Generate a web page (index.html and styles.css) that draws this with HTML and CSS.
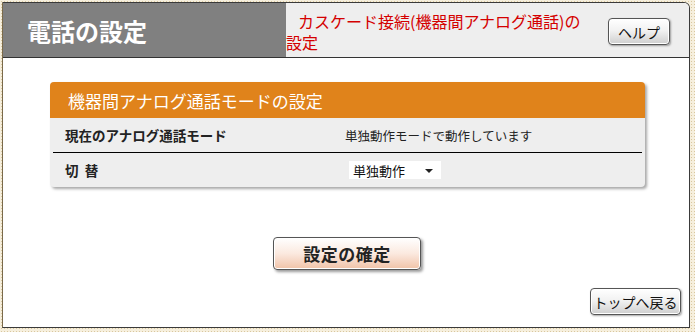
FILE: index.html
```html
<!DOCTYPE html>
<html lang="ja">
<head>
    <meta charset="UTF-8">
    <title>電話の設定</title>
    <link rel="stylesheet" href="styles.css">
</head>
<body>
    <div class="frame">
        <div class="header">
            <div class="title">電話の設定</div>
            <div class="subhead">
                <p class="subtitle">カスケード接続(機器間アナログ通話)の設定</p>
                <button class="btn help-btn">ヘルプ</button>
            </div>
        </div>

        <div class="content">
            <div class="card">
                <div class="card-head">機器間アナログ通話モードの設定</div>
                <div class="row row-line">
                    <div class="label">現在のアナログ通話モード</div>
                    <div class="value">単独動作モードで動作しています</div>
                </div>
                <div class="row">
                    <div class="label">切&nbsp;&nbsp;替</div>
                    <div class="value">
                        <div class="select-wrap">
                            <select class="mode-select">
                                <option>単独動作</option>
                                <option>親機動作</option>
                                <option>子機動作</option>
                            </select>
                        </div>
                    </div>
                </div>
            </div>

            <button class="submit-btn">設定の確定</button>

            <div class="footer">
                <button class="btn top-btn">トップへ戻る</button>
            </div>
        </div>
    </div>
</body>
</html>
```

FILE: styles.css
```css
body {
    margin: 0;
    width: 695px;
    height: 332px;
    overflow: hidden;
    background-color: #f6efdd;
    background-image: radial-gradient(#d9c79f 0.8px, transparent 1px);
    background-size: 3px 3px;
    font-family: "Noto Sans CJK JP", "DejaVu Sans", sans-serif;
    color: #222;
}
.frame {
    margin: 2px 0 0 2px;
    width: 686px;
    height: 324px;
    border: 1px solid #3a3a3a;
    border-left-color: #7a6a4a;
    border-top-right-radius: 6px;
    background: #fff;
    display: flex;
    flex-direction: column;
    overflow: hidden;
}
.header {
    display: flex;
    height: 54px;
    border-bottom: 1px solid #333;
    flex-shrink: 0;
}
.title {
    width: 259px;
    padding-left: 24px;
    background: #808080;
    color: #fff;
    font-size: 24px;
    font-weight: bold;
    display: flex;
    align-items: center;
}
.subhead {
    flex: 1;
    background: #eeeeee;
    display: flex;
    justify-content: space-between;
    align-items: flex-start;
}
.subtitle {
    margin: 8px 0 0;
    width: 296px;
    color: #d40000;
    font-size: 16px;
    line-height: 21px;
    text-indent: 12px;
}
.btn {
    font-family: inherit;
    font-size: 14px;
    color: #111;
    border: 1px solid #555;
    border-radius: 4px;
    background: linear-gradient(#ffffff, #f2f2f2 45%, #cfcfcf);
    box-shadow: inset 0 0 0 1px #fff, 1px 1px 2px rgba(0, 0, 0, 0.35);
    padding: 0;
    cursor: pointer;
}
.help-btn {
    width: 62px;
    height: 27px;
    margin: 15px 19px 0 0;
}
.content {
    flex: 1;
    display: flex;
    flex-direction: column;
    padding: 24px 0 0 47px;
}
.card {
    width: 595px;
    background: #eeeeee;
    border-radius: 4px;
    box-shadow: 2px 2px 3px rgba(0, 0, 0, 0.35);
    overflow: hidden;
}
.card-head {
    height: 36px;
    background: #e0831b;
    color: #fff;
    font-size: 17px;
    padding-left: 18px;
    display: flex;
    align-items: center;
}
.row {
    display: flex;
    align-items: center;
    height: 34px;
}
.row-line {
    margin: 0 3px;
    border-bottom: 1px solid #000;
}
.label {
    width: 283px;
    padding-left: 15px;
    font-size: 13.5px;
    font-weight: bold;
}
.row-line .label {
    width: 280px;
    padding-left: 12px;
}
.value {
    font-size: 12.5px;
}
.select-wrap {
    position: relative;
    width: 92px;
    height: 18px;
    margin-left: 1px;
}
.select-wrap::after {
    content: "";
    position: absolute;
    right: 8px;
    top: 8px;
    border-left: 4px solid transparent;
    border-right: 4px solid transparent;
    border-top: 4px solid #222;
    pointer-events: none;
}
.mode-select {
    appearance: none;
    -webkit-appearance: none;
    width: 92px;
    height: 18px;
    border: none;
    background: #fff;
    font-family: inherit;
    font-size: 13px;
    padding: 0 0 0 4px;
    margin: 0;
    color: #111;
}
.submit-btn {
    align-self: center;
    margin: 50px 0 0 -45px;
    width: 148px;
    height: 33px;
    font-family: inherit;
    font-size: 17px;
    font-weight: bold;
    color: #222;
    border: 1px solid #555;
    border-radius: 4px;
    background: linear-gradient(#ffffff, #fbe9df 50%, #f1c3a8);
    box-shadow: inset 0 0 0 1px #fff, 2px 2px 3px rgba(0, 0, 0, 0.4);
    letter-spacing: 0.5px;
    cursor: pointer;
}
.footer {
    display: flex;
    justify-content: flex-end;
    margin-top: 18px;
    padding-right: 8px;
}
.top-btn {
    width: 91px;
    height: 27px;
}
```
